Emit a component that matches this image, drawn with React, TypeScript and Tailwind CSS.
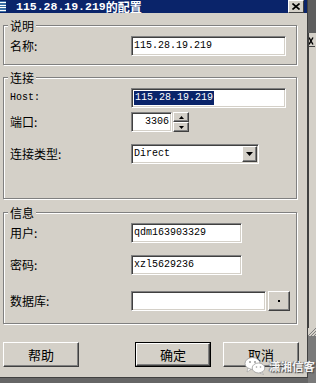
import React from "react";

const cjk = "font-['Noto_Sans_CJK_SC',sans-serif]";
const mono = "font-['Liberation_Mono','Noto_Sans_CJK_SC',monospace]";

const sunken =
  "border border-t-[#808080] border-l-[#808080] border-b-white border-r-white bg-white shadow-[inset_1px_1px_0_#404040,inset_-1px_-1px_0_#d4d0c8]";
const raised =
  "border border-t-white border-l-white border-b-[#404040] border-r-[#404040] bg-[#d4d0c8] shadow-[inset_-1px_-1px_0_#808080]";

function Group({
  title,
  className,
  children,
}: {
  title: string;
  className: string;
  children: React.ReactNode;
}) {
  return (
    <div
      className={`relative ml-[3px] w-[294px] border border-[#808080] shadow-[1px_1px_0_#fff,inset_1px_1px_0_#fff] ${className}`}
    >
      <span
        className={`absolute -top-[7px] left-[4px] bg-[#d4d0c8] px-[2px] text-[12px] leading-[14px] text-black ${cjk}`}
      >
        {title}
      </span>
      {children}
    </div>
  );
}

function Row({
  label,
  labelMono,
  className = "",
  children,
}: {
  label: string;
  labelMono?: boolean;
  className?: string;
  children: React.ReactNode;
}) {
  return (
    <div className={`flex items-center ${className}`}>
      <span
        className={`w-[127px] pl-[6px] text-black ${
          labelMono ? `${mono} text-[10px]` : `${cjk} text-[12px]`
        } leading-[14px]`}
      >
        {label}
      </span>
      {children}
    </div>
  );
}

function Input({ value, width }: { value: string; width: string }) {
  return (
    <div className={`flex h-[20px] items-center px-[2px] ${sunken} ${width}`}>
      <span className={`${mono} text-[10px] leading-[12px] text-black`}>
        {value}
      </span>
    </div>
  );
}

function Tri({ up }: { up?: boolean }) {
  return (
    <svg width="5" height="3" viewBox="0 0 5 3">
      <path d={up ? "M2.5 0L5 3H0z" : "M0 0h5L2.5 3z"} fill="#000" />
    </svg>
  );
}

function DialogButton({
  label,
  isDefault,
  className = "",
}: {
  label: string;
  isDefault?: boolean;
  className?: string;
}) {
  return (
    <div
      className={`h-[25px] w-[76px] ${
        isDefault ? "border border-black" : ""
      } ${className}`}
    >
      <div
        className={`flex h-full w-full items-center justify-center ${raised} ${cjk} text-[13px] leading-[14px] text-black`}
      >
        {label}
      </div>
    </div>
  );
}

function WeChatMark() {
  return (
    <div className="absolute left-[244px] top-[356px] flex items-center gap-[3px]">
      <svg width="22" height="19" viewBox="0 0 22 19">
        <ellipse cx="8.5" cy="7.5" rx="7.5" ry="6" fill="#ffffff" stroke="#9a9a9a" strokeWidth="0.8" />
        <path d="M4 12l-1 4 4-2.5z" fill="#ffffff" stroke="#9a9a9a" strokeWidth="0.6" />
        <ellipse cx="14.5" cy="12" rx="6.3" ry="5" fill="#ffffff" stroke="#9a9a9a" strokeWidth="0.8" />
        <path d="M18 16l1.5 2.5-3.5-1.5z" fill="#ffffff" stroke="#9a9a9a" strokeWidth="0.6" />
        <circle cx="6" cy="6" r="1" fill="#9a9a9a" />
        <circle cx="11" cy="6" r="1" fill="#9a9a9a" />
        <circle cx="12.5" cy="11" r="0.8" fill="#9a9a9a" />
        <circle cx="16.5" cy="11" r="0.8" fill="#9a9a9a" />
      </svg>
      <span
        className={`${cjk} text-[11.5px] font-bold leading-[14px] text-[#f4f4f4] [text-shadow:1px_1px_1px_#444,-1px_0_1px_#777]`}
      >
        潇湘信客
      </span>
    </div>
  );
}

export default function App() {
  return (
    <div className="relative flex h-[383px] w-[316px] overflow-hidden bg-[#666666]">
      {/* dialog */}
      <div className="flex h-[378px] w-[308px] shrink-0 flex-col border-b border-r border-[#404040] bg-[#d4d0c8]">
        {/* title bar */}
        <div className="flex h-[13px] shrink-0 items-center bg-[#0a246a]">
          <div className="flex h-[11px] w-[6px] flex-col justify-between bg-[#3a6ea5] py-[1px]">
            <div className="h-px bg-white" />
            <div className="h-px bg-white" />
            <div className="h-px bg-white" />
            <div className="h-px bg-white" />
          </div>
          <span className="ml-[10px] flex items-center whitespace-nowrap leading-[12px] text-white">
            <span className={`${mono} text-[11.5px] font-bold leading-[12px]`}>115.28.19.219</span>
            <span className={`${cjk} text-[12px] font-bold leading-[12px]`}>的配置</span>
          </span>
          <div className="ml-auto mr-[3px] flex h-[13px] w-[16px] items-center justify-center border border-t-white border-l-white border-b-[#404040] border-r-[#404040] bg-[#d4d0c8]">
            <svg width="8" height="7" viewBox="0 0 8 7">
              <path d="M0.5 0.5l7 6M7.5 0.5l-7 6" stroke="#000" strokeWidth="1.6" />
            </svg>
          </div>
        </div>

        <Group title="说明" className="mt-[12px] h-[40px] pt-[10px]">
          <Row label="名称:">
            <Input value="115.28.19.219" width="w-[155px]" />
          </Row>
        </Group>

        <Group title="连接" className="mt-[12px] h-[122px] pt-[10px]">
          <Row label="Host:" labelMono>
            <div className={`flex h-[20px] w-[155px] items-center px-[2px] ${sunken}`}>
              <span className={`${mono} bg-[#0a246a] px-px text-[10px] leading-[14px] text-white`}>
                115.28.19.219
              </span>
            </div>
          </Row>
          <Row label="端口:" className="mt-[4px]">
            <div className={`flex h-[20px] w-[41px] items-center justify-end pr-[2px] ${sunken}`}>
              <span className={`${mono} text-[10px] leading-[12px] text-black`}>3306</span>
            </div>
            <div className="ml-px flex h-[20px] w-[16px] flex-col">
              <div className={`flex h-[10px] items-center justify-center ${raised}`}>
                <Tri up />
              </div>
              <div className={`flex h-[10px] items-center justify-center ${raised}`}>
                <Tri />
              </div>
            </div>
          </Row>
          <Row label="连接类型:" className="mt-[12px]">
            <div className={`flex h-[20px] w-[128px] items-center justify-between pl-[2px] pr-px ${sunken}`}>
              <span className={`${mono} text-[10px] leading-[12px] text-black`}>Direct</span>
              <div className={`flex h-[16px] w-[15px] items-center justify-center ${raised}`}>
                <svg width="7" height="4" viewBox="0 0 7 4">
                  <path d="M0 0h7L3.5 4z" fill="#000" />
                </svg>
              </div>
            </div>
          </Row>
        </Group>

        <Group title="信息" className="mt-[13px] h-[112px] pt-[10px]">
          <Row label="用户:">
            <Input value="qdm163903329" width="w-[111px]" />
          </Row>
          <Row label="密码:" className="mt-[12px]">
            <Input value="xzl5629236" width="w-[111px]" />
          </Row>
          <Row label="数据库:" className="mt-[16px]">
            <Input value="" width="w-[135px]" />
            <div className={`ml-[2px] flex h-[20px] w-[22px] items-center justify-center ${raised}`}>
              <div className="h-[2px] w-[2px] bg-black" />
            </div>
          </Row>
        </Group>

        <div className="mt-[18px] flex">
          <DialogButton label="帮助" className="ml-[3px]" />
          <DialogButton label="确定" isDefault className="ml-[56px]" />
          <DialogButton label="取消" className="ml-[12px]" />
        </div>
      </div>

      {/* window behind, right edge */}
      <div className="flex w-[8px] flex-col">
        <div className="h-[33px] bg-[#5e5e5e]" />
        <div className="flex h-[295px] flex-col border-l border-[#404040] bg-[#d4d0c8]">
          <div className="mt-[2px] flex h-[12px] w-[6px] items-center border-b border-[#404040] bg-[#d4d0c8]">
            <svg width="6" height="8" viewBox="0 0 6 8">
              <path d="M0 0.5l4 7M4 0.5l-4 7" stroke="#000" strokeWidth="1.4" />
            </svg>
          </div>
        </div>
        <div className="h-[8px] bg-[#d4d0c8]">
          <svg width="8" height="8" viewBox="0 0 8 8">
            <path d="M0 8L8 0M3 8L8 3M6 8L8 6" stroke="#808080" strokeWidth="1" />
          </svg>
        </div>
        <div className="flex-1 bg-[#7a7a7a]" />
      </div>

      <WeChatMark />
    </div>
  );
}
